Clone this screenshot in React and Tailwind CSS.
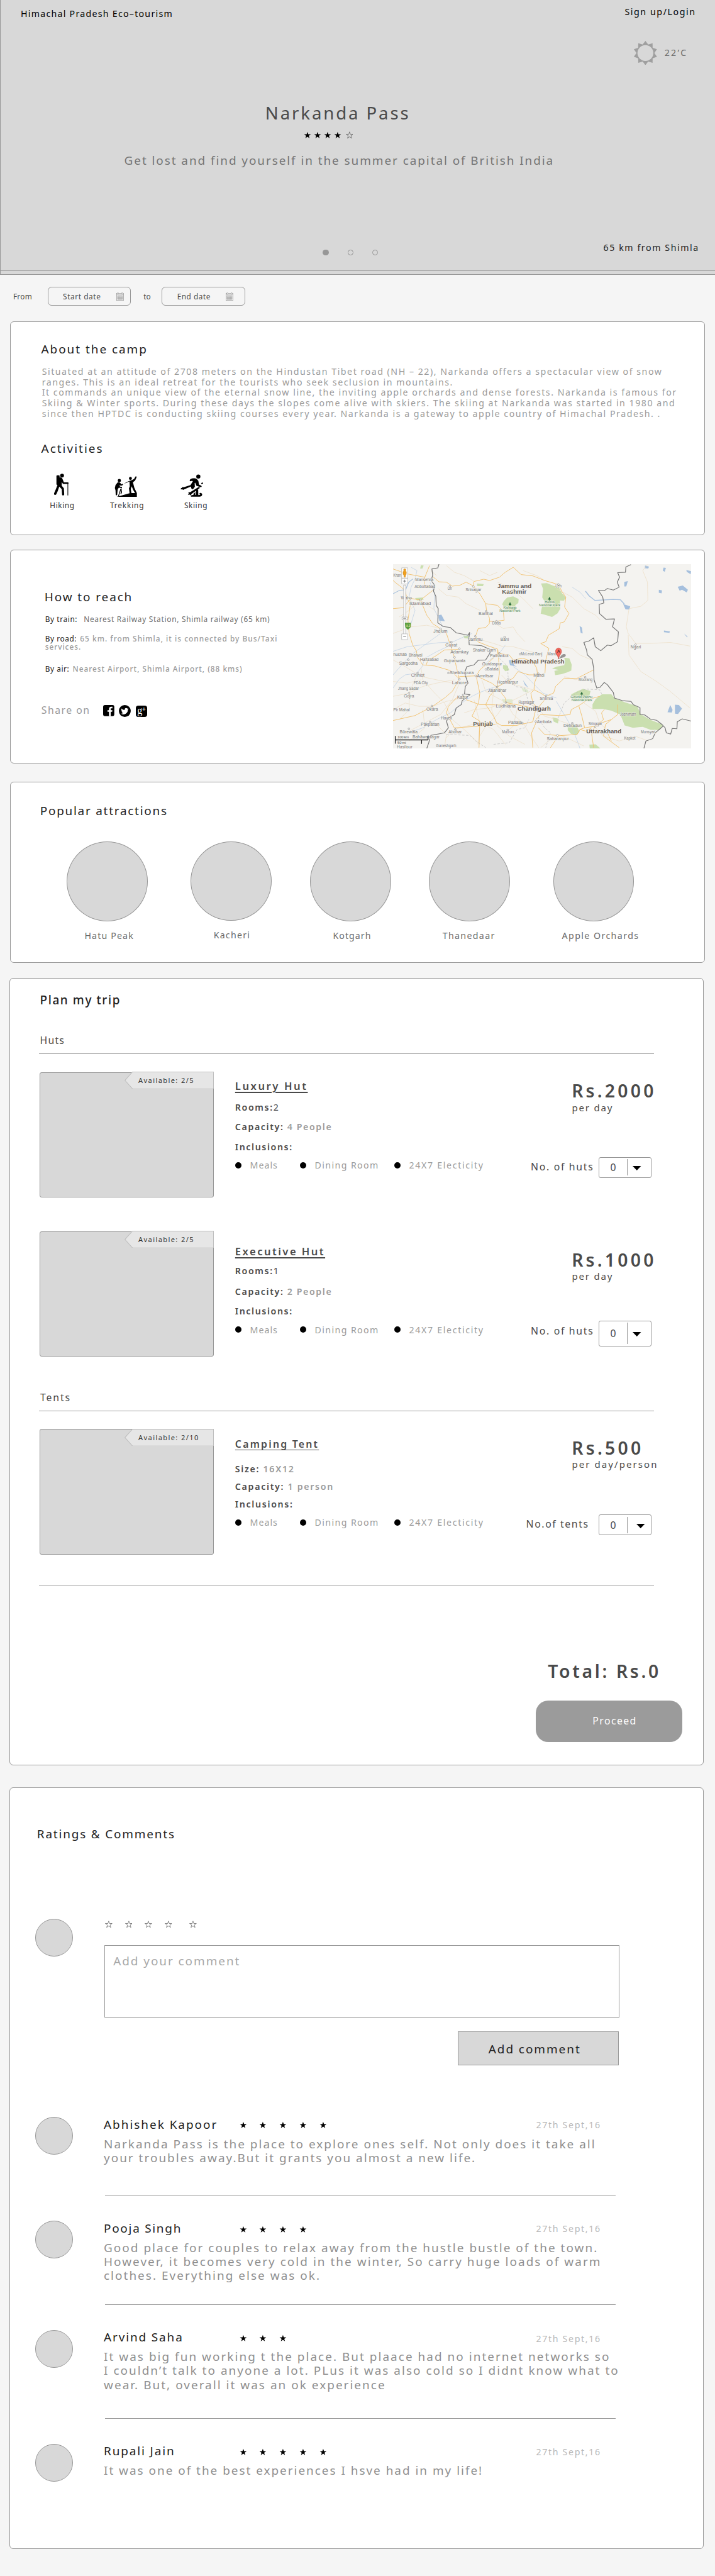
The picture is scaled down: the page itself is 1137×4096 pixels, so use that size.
import React from "react";

/* The page is laid out on a 0.78958px spacing unit, set once on the root. */

const star = "M12 1.2 14.7 9h8.2l-6.6 4.9 2.5 7.9L12 17l-6.8 4.8 2.5-7.9L1.1 9h8.2z";

function Star({ outline = false, className = "" }) {
  return (
    <svg viewBox="0 0 24 23" className={`h-14.5 w-15 shrink-0 ${className}`}>
      <path
        d={star}
        fill={outline ? "none" : "#000"}
        stroke={outline ? "#4a4a4a" : "none"}
        strokeWidth="1.3"
      />
    </svg>
  );
}

function Sun() {
  const pts = Array.from({ length: 20 }, (_, i) => {
    const r = i % 2 ? 18 : 24.5;
    const a = (i * Math.PI) / 10 - Math.PI / 2;
    return `${(24.5 + r * Math.cos(a)).toFixed(2)},${(24.5 + r * Math.sin(a)).toFixed(2)}`;
  }).join(" ");
  return (
    <svg viewBox="0 0 49 49" className="h-49 w-49">
      <polygon points={pts} fill="#9f9f9f" />
      <circle cx="24.5" cy="24.5" r="16" fill="#d8d8d8" />
    </svg>
  );
}

function CalendarIcon() {
  return (
    <svg viewBox="0 0 15 17" className="h-17 w-15" fill="none" stroke="#8a8a8a">
      <rect x=".5" y="2" width="14" height="14.4" strokeWidth=".8" />
      <path d="M.5 4.8h14" strokeWidth=".7" />
      <path d="M0 16.4h15" strokeWidth="1" />
      <circle cx="3.2" cy="1.8" r="1.3" fill="#f5f5f5" strokeWidth=".8" />
      <circle cx="11.8" cy="1.8" r="1.3" fill="#f5f5f5" strokeWidth=".8" />
      <path
        d="M2.5 7h10M2.5 9.3h10M2.5 11.6h10M2.5 14h10M2.5 7v7M5 7v7M7.5 7v7M10 7v7M12.5 7v7"
        strokeWidth=".8"
      />
    </svg>
  );
}

function HikingIcon() {
  return (
    <svg viewBox="145 68 88 132" className="mb-3 ml-8 h-44 w-29.5">
      <circle cx="193" cy="80" r="11.5" />
      <rect x="159" y="78" width="19" height="59" rx="5" />
      <path d="M176 92c8-3 16 0 19 7l9 22h24c6 0 6 10 0 10h-29l-8-12v22l13 16 2 36c0 9-12 9-13 1l-2-32-15-15-9 26-9 20c-5 8-17 3-13-6l11-26 14-36z" />
      <path d="M226 128h4v72h-4z" />
    </svg>
  );
}

function TrekkingIcon() {
  return (
    <svg viewBox="509 84 137 126" className="ml-9 h-42 w-46">
      <circle cx="538" cy="111" r="9.5" />
      <path d="M528 122c6-3 14 0 17 5l5 7 8-3 3 6-13 6-9-5 3 10 12 2v6l-19-2-7 10-3 32c-1 6-9 6-9-1l-1-25-4-14 4-18z" />
      <path d="M545 160h5l-15 46h-5zM551 152l3 30-5 12-4-4z" />
      <circle cx="605" cy="98" r="9" />
      <path d="M565 130l30-16 20-6 12-7 8-13c3-4 9-1 7 4l-9 20-13 9 9 34 15 32v22H522l38-10 40-11-4-30 5-12-2-30-18 9-13 4zM613 146l-6 16 4 25h22l-12-20z" fillRule="evenodd" />
    </svg>
  );
}

function SkiingIcon() {
  return (
    <svg viewBox="907 74 138 136" className="h-45.5 w-46.5">
      <circle cx="1014" cy="88" r="12.5" />
      <path d="M966 104c12-7 30-6 38-2l10 12 4 22 13 7c6 4 2 11-4 9l-24-8-8-19-3 2 1 23-12 16-9-6-5-21 14-22-4-3-13 3c-3-4-2-9 2-13z" />
      <path d="M968 139l4 8-42 18-8 4-4-4-9 1v-8l7-2 2-5 8 2zM1036 124c7-1 9 5 5 8l-7 2-4-4zM1017 151l7 5-50 36-6 10-5-5-12 1 5-8-2-8 10 1z" />
      <path d="M1000 165l13 2 1 33 12-3-6-6c4-9 20-3 17 8-2 7-8 10-15 10h-50c-7-2-2-8 3-9l10-1-1-7 12-10-1 16h5z" />
    </svg>
  );
}

/* Map geometry is in a 1520 x 1113 survey grid that starts at (28, 21). */
const mapLabels = [
  ["Mansehra", 141, 233, 124], ["Abbottabad", 138, 243, 164], ["Uri", 306, 328, 176],
  ["Srinagar", 397, 478, 185, 1], ["Leh", 855, 886, 162], ["Wah", 68, 112, 233],
  ["Islamabad", 111, 221, 267, 1], ["Banihal", 464, 537, 329], ["Doda", 533, 576, 387],
  ["Jhelum", 234, 305, 437], ["Jammu", 412, 484, 486, 1], ["Bani", 575, 618, 484],
  ["Gujrat", 295, 355, 518, 1], ["Adamkay", 320, 413, 561], ["Shakar Garh", 434, 551, 549],
  ["Pathankot", 522, 616, 583], ["McLeod Ganj", 679, 788, 572], ["Manali", 814, 872, 572],
  ["hushāb", 30, 98, 577], ["Bhalwal", 108, 177, 580], ["Sargodha", 59, 153, 628, 1],
  ["Hafizabad", 166, 260, 608], ["Gujranwala", 287, 396, 612, 1], ["Gurdaspur", 482, 583, 633],
  ["Batala", 506, 565, 663], ["Sheikhupura", 317, 439, 687], ["Amritsar", 456, 539, 705],
  ["Mandi", 743, 799, 703], ["Chiniot", 120, 188, 701], ["FDA City", 134, 205, 745],
  ["Lahore", 328, 404, 746, 1], ["Hoshiarpur", 559, 665, 742], ["Moorang", 973, 1044, 727],
  ["Jhang Sadar", 54, 159, 782], ["Jalandhar", 511, 605, 791, 1], ["Gojra", 83, 135, 826],
  ["Kasur", 355, 411, 833], ["Shimla", 775, 843, 841], ["Rupnagar", 667, 747, 865],
  ["Ludhiana", 552, 653, 886, 1], ["Pir Mahal", 30, 113, 911], ["Okāra", 198, 257, 905],
  ["Joshimath", 1184, 1266, 936], ["Haveli", 272, 329, 959], ["Pākpattan", 170, 264, 999],
  ["Patiala", 614, 684, 987], ["Ambala", 761, 835, 983, 1], ["Dehradun", 896, 989, 1004],
  ["Srinagar", 1023, 1093, 994], ["Būrewāla", 62, 153, 1045], ["Abohar", 311, 378, 1044],
  ["Mauran", 583, 644, 1044], ["Munsyari", 1290, 1364, 1042], ["Bahāwalnagar", 127, 265, 1074],
  ["Saharanpur", 811, 923, 1084], ["Kapkot", 1205, 1262, 1081], ["Ganeshgarh", 247, 350, 1125],
  ["Ngari", 1238, 1291, 530], ["Khan", 30, 68, 96],
];
const mapRegions = [
  ["Jammu and", 560, 733, 164], ["Kashmir", 583, 708, 200], ["Himachal Pradesh", 631, 901, 622],
  ["Chandigarh", 662, 831, 907], ["Punjab", 436, 537, 997], ["Uttarakhand", 1012, 1191, 1045],
];
const mapParks = [
  ["Kishtwar", 590, 658, 289], ["National Park", 570, 677, 309], ["Hemis", 801, 851, 256],
  ["National Park", 771, 880, 276], ["Govind Pashu", 932, 1044, 831], ["National Park", 937, 1043, 851],
];
const towns = [
  [437, 156], [167, 238], [447, 457], [325, 492], [366, 532], [569, 560], [106, 599], [341, 584],
  [366, 716], [449, 696], [310, 679], [558, 764], [613, 718], [603, 857], [755, 972], [687, 981],
  [226, 878], [217, 975], [109, 1016], [345, 1020], [807, 817], [768, 683], [502, 306], [555, 366],
  [870, 144], [317, 155], [270, 413], [865, 1056], [941, 982], [1058, 1003], [1263, 508], [385, 811],
  [109, 802], [153, 679], [596, 462], [1007, 704], [612, 1023], [118, 226], [675, 565], [501, 657],
];

const mx = (x) => (x - 28) * 0.3954;
const my = (y) => (y - 21) * 0.3333;

function MapText({ items, size, fill, bold }) {
  return items.map(([t, x1, x2, y, big], i) => (
    <text
      key={i}
      x={mx(x1)}
      y={my(y)}
      textLength={(x2 - x1) * 0.3954}
      lengthAdjust="spacingAndGlyphs"
      fontSize={big ? size + 1 : size}
      fontWeight={bold ? 700 : 400}
      fill={fill}
      stroke="#f4f3f0"
      strokeWidth="2"
      strokeOpacity=".7"
      paintOrder="stroke"
    >
      {t}
    </text>
  ));
}

function RegionMap() {
  return (
    <svg viewBox="0 0 601 371" className="mt-28 h-371 w-601 shrink-0 font-['Liberation_Sans']">
      <rect width="601" height="371" fill="#f4f3f0" />
      <g transform="scale(.3954 .3333) translate(-28 -21)" fill="none" strokeLinejoin="round">
        <g fill="#cadfaf">
          <path d="M610 222 640 216 668 232 666 256 650 270 660 290 640 306 604 304 598 284 584 264 592 244z" />
          <path d="M782 138 812 136 846 152 872 160 888 196 908 222 898 242 878 240 880 290 866 318 838 340 804 328 780 320 786 282 802 250 788 222 792 170z" />
          <path d="M900 586 926 590 938 628 936 664 914 676 886 686 854 692 850 666 872 660 838 652 862 640 900 632 904 608z" />
          <path d="M1044 868 1060 836 1092 808 1140 808 1158 832 1210 856 1272 880 1290 928 1340 962 1404 992 1386 1024 1340 1022 1300 1004 1250 1010 1208 996 1186 930 1140 906 1096 896 1044 896z" />
          <path d="M936 808 966 790 996 774 1034 788 1026 826 1036 850 960 846 938 838z" />
          <path d="M588 630 610 634 620 662 600 668 588 652zM918 996 960 990 978 1034 960 1056 934 1046 918 1024zM1028 1112 1060 1110 1084 1134H1030z" />
          <path d="M456 138 490 142 486 154 456 154zM140 226 180 222 184 236 150 240zM386 452 412 454 410 470 392 468zM840 946 872 956 868 984 846 972zM170 28 184 30 178 48 166 48z" />
          <path d="M682 768 714 780 720 798 690 790zM582 836 636 838 638 862 590 858z" fillOpacity=".5" />
        </g>
        <g fill="#a5bfdd">
          <path d="M1206 128 1224 124 1216 156 1206 156zM1478 158 1504 150 1530 176 1524 192 1500 176 1488 182zM1382 176 1398 180 1396 198 1382 194zM1406 42 1418 44 1412 68 1402 60zM1312 30 1332 36 1328 48 1310 46zM1522 56 1546 64 1544 82 1524 68zM978 394 990 404 994 440 984 436zM1464 870 1484 872 1500 894 1480 926 1464 924zM1440 872 1452 902 1448 918 1426 916zM1200 262 1236 276 1232 296 1212 294zM1408 422 1438 428 1436 436 1408 432zM1510 440 1528 458 1526 464zM618 602 640 600 644 632 660 640 624 632zM260 330 274 326 292 366 262 362zM690 722 718 770 700 752z" />
        </g>
        <g stroke="#a5bfdd" strokeWidth="5">
          <path d="M1008 184 1028 214 1056 240 1090 238 1150 234 1186 236 1206 262" />
          <path d="M28 200 60 180 92 176 108 130 130 110" strokeWidth="4" />
        </g>
        <g stroke="#bdd0e6" strokeWidth="2.6">
          <path d="M28 548 100 520 180 508 260 496 330 492 390 460 430 440" />
          <path d="M28 770 60 716 90 690 150 680 176 640 190 590 250 550 330 506" />
          <path d="M110 1040 180 1010 250 960 320 920 390 850 430 820 470 796 530 770 600 740" />
          <path d="M216 130 240 200 236 290 262 350 280 400M28 690 80 620 130 560 200 500 270 440" />
          <path d="M480 640 520 600 570 560 600 510M640 640 700 690 740 740 790 800 860 830" />
          <path d="M860 850 900 930 940 1010 970 1100 980 1134M940 160 980 190 1010 230" />
          <path d="M120 40 150 60 140 110 120 160 110 220 140 300 120 380" />
        </g>
        <g stroke="#ecdcc2" strokeWidth="2.4">
          <path d="M300 30 340 70 390 90 440 124M470 60 520 90 560 70M690 60 760 90 800 120M860 170 940 220 1000 290 1060 330 1084 360" />
          <path d="M260 170 300 210 360 220 400 260 470 300M550 380 590 410 640 400 660 440 700 490M480 480 540 500 590 520 640 520 700 540 760 560" />
          <path d="M1324 24 1300 60 1324 130 1326 240 1290 276 1230 290 1216 400 1226 440 1264 500 1340 500 1440 494 1540 516M1226 450 1230 570 1290 670 1370 730 1440 790 1540 890" />
          <path d="M890 520 940 530 980 570 1040 600M900 700 960 720 1000 700M28 600 90 640 170 700 250 720 330 740" />
          <path d="M28 820 110 800 180 760 250 740 340 720M60 960 110 900 110 800 150 690M110 1030 190 980 270 930 330 840 370 730" />
          <path d="M170 640 180 720 240 800 290 860 330 960 400 1030 470 1110M28 900 90 860 160 880 230 880 300 850 390 830" />
          <path d="M300 1070 340 1020 400 1000 470 980 540 1020 600 1110M440 840 470 980 460 1110M540 790 530 900 560 1000 620 1060 700 1110" />
          <path d="M600 860 560 930 500 1000 470 1060M610 870 640 930 690 980 730 1060 770 1130M480 720 500 790 560 830 610 860 680 820 740 780" />
          <path d="M580 690 620 740 680 760 740 780M760 880 800 940 860 960 930 990 1000 1000M870 1050 820 1090 780 1130M870 1050 930 1080 1000 1120M1060 1010 1100 1060 1180 1090 1260 1060 1330 1090" />
          <path d="M1000 860 1060 910 1080 980 1130 1040M220 60 250 90M560 130 620 160 690 230 740 290M28 440 120 400 200 390 270 410M60 340 110 300 170 240 240 300" />
          <path d="M28 730 100 740 170 720M180 900 190 1010 110 1090M240 980 300 1050 290 1130M390 920 440 900 520 890 590 860M660 900 640 1000 600 1040M700 860 760 880" />
        </g>
        <g stroke="#f1c06c" strokeWidth="3.2">
          <path d="M232 98 262 128 300 130 330 154 370 148 400 130 436 152M436 152 440 126 490 112 520 120 570 100 600 70 640 40 680 84 740 92 800 120 870 144M436 152 470 200 500 260 504 300 520 350 518 382 500 404 462 410 450 450" />
          <path d="M500 260 560 270 590 310 594 360 540 368 518 366M870 144 890 190 908 220 902 280 924 320 900 370 880 376 874 412 820 450 806 490 780 500 822 530 806 600 802 680" />
          <path d="M450 460 460 490 510 514 560 534 562 560 620 570 640 600 690 590 740 610 760 650 764 690M562 540 566 600 570 680 558 760M568 556 510 620 470 660 452 696" />
          <path d="M168 238 200 330 230 380 270 412 300 440 340 580 350 640 366 714M28 50 100 80 190 100 214 30M190 100 186 150 228 160M28 120 90 180 98 226 118 228 168 238 230 180M28 290 80 284 118 230" />
          <path d="M94 230 118 250 104 360 110 440 128 510 148 548 150 580 180 630 240 636 320 664 366 714M196 632 206 600 240 580 290 540 360 536" />
          <path d="M366 714 330 790 290 830 230 880 140 936 28 966M366 700 452 696 530 740 558 764 640 710 664 670 720 690 764 690 748 740 746 780" />
          <path d="M558 764 600 830 604 858 700 880 756 896 768 880M558 764 520 820 500 870 540 940 556 980 580 996 655 996 740 974 756 894M400 840 470 870 600 872 650 866" />
          <path d="M400 820 350 830 310 880 300 920 340 1010 470 1000 550 990M452 700 470 800 464 860 430 940 470 970 466 1130" />
          <path d="M746 780 730 800 740 860 766 890 796 848 806 820 846 800 856 760 900 710 964 712 1000 690 1050 660M746 780 780 800 806 820" />
          <path d="M756 960 780 930 880 936 930 930 936 900 974 876 1020 840 1080 820M756 980 734 1040 740 1130M974 876 990 940 1004 1010 980 1020 966 1050 870 1058 830 1130M768 1010 800 1050 866 1056M1004 1010 1060 1000 1100 960 1090 920 1104 900" />
          <path d="M1140 960 1090 980 1056 1000 1040 1050 1050 1130M1170 870 1172 930 1110 990 1100 1060 1180 1130M980 1020 1010 1030 1040 1010M1084 1030 1120 1040 1140 1090" />
        </g>
        <g stroke="#b9b9b9" strokeWidth="2.4" strokeDasharray="12 8">
          <path d="M570 590 612 640 614 700 650 760 700 770 716 850 760 900 772 960 800 1010 830 1040 806 1130M870 950 900 860 960 800 1010 776 1080 780 1092 808M300 1050 420 1056 450 1090 500 1130M540 1110 620 1100 660 1020 700 1010 720 960" />
        </g>
        <g stroke="#777" strokeWidth="4">
          <path d="M262 21 256 44 226 50 230 88 222 120 240 148 234 184 246 216 248 270 258 290 256 376 284 398 320 404 350 436 410 450 418 434 414 470 416 508 480 514 520 536 522 558 500 600 462 602 440 630 404 640 392 680 410 740 396 760 392 806 420 810 400 830 380 846 376 870 350 890 340 930 310 950 300 970 310 1010 290 1040 220 1056 210 1100 200 1134" />
          <path d="M1240 24 1214 38 1212 70 1172 72 1182 100 1170 130 1180 160 1150 178 1120 168 1104 182 1074 180 1096 220 1102 256 1078 264 1080 320 1112 354 1156 352 1146 400 1176 430 1172 490 1138 514 1120 510 1086 544 1058 520 1050 466 1026 486 1000 494 1014 540 1018 570 1042 596 1050 650 1052 720 1066 770 1082 766 1104 736 1120 750 1150 796 1156 830 1196 846 1240 850 1252 870 1286 888 1286 930 1310 932 1340 958 1370 964 1398 990 1414 1010 1420 1040 1442 1048 1450 1014 1474 1016 1476 974 1500 956 1550 970" />
          <path d="M1404 1000 1364 1040 1350 1076 1316 1090 1306 1134" />
        </g>
      </g>
      <MapText items={mapLabels} size={8.2} fill="#777" />
      <MapText items={mapParks} size={6.6} fill="#4f8a5b" />
      <MapText items={mapRegions} size={12} fill="#635a52" bold />
      {towns.map(([x, y], i) => (
        <circle key={i} cx={mx(x)} cy={my(y)} r="1.7" fill="#fff" stroke="#777" strokeWidth=".8" />
      ))}
      {[[624, 262], [825, 230], [989, 803]].map(([x, y], i) => (
        <path
          key={i}
          transform={`translate(${mx(x)} ${my(y)})`}
          d="M0-4 3 2H.6V4H-.6V2H-3z"
          fill="#2f6e41"
        />
      ))}
      <g transform={`translate(${mx(871)} ${my(595)})`}>
        <path d="M0 0 6-8C10-12 17-10 14-6 12-3 6-3 0 0z" fill="#555" fillOpacity=".6" />
        <path d="M0 0C-1-8-6-10-6-16a6 6.5 0 0 1 12 0C6-10 1-8 0 0z" fill="#f7685c" stroke="#a83c34" strokeWidth=".7" />
        <text y="-12.5" textAnchor="middle" fontSize="8.5" fill="#222">A</text>
      </g>
      <g>
        <rect x="21.5" y="42" width="4" height="102" fill="#fff" stroke="#9a9a9a" strokeWidth=".8" />
        <path d="M24 118h12v6c0 4-3 5-6 8-3-3-6-4-6-8z" fill="#5a9e3f" />
        <text x="30" y="127" textAnchor="middle" fontSize="6" fontWeight="700" fill="#e8e6a8">H-2</text>
        <rect x="17.5" y="7.5" width="12" height="20.5" fill="#fff" stroke="#aaa" strokeWidth=".8" />
        <path d="M23.5 9.5a2.4 2.4 0 0 1 1.5 4.300l2 1.500-.4 5.700-1.300.4-.4 5h-2.800l-.4-5-1.300-.4-.4-5.700 2-1.500a2.400 2.400 0 0 1 1.500-4.300z" fill="#f0a020" stroke="#b87810" strokeWidth=".5" />
        <rect x="17.5" y="28.5" width="12" height="11.5" fill="#fff" stroke="#aaa" strokeWidth=".8" />
        <rect x="17.5" y="140.5" width="12" height="11.5" fill="#fff" stroke="#aaa" strokeWidth=".8" />
        <rect x="18" y="106.5" width="11" height="5.5" fill="#fff" stroke="#999" strokeWidth=".8" />
        <path d="M20.5 34.3h6M23.5 31.3v6M20.5 146.2h6M20.5 109.2h6" stroke="#777" strokeWidth="1.1" />
      </g>
      <g>
        <path d="M4.500 346v15.500M4.500 354h66M70.500 346v8M57.500 354v8" fill="none" stroke="#222" strokeWidth="1.6" />
        <text x="9" y="350.5" fontSize="7.5" textLength="23" fill="#555">100 km</text>
        <text x="9" y="362.5" fontSize="7.5" textLength="17" fill="#555">50 mi</text>
        <text x="8" y="370.5" fontSize="8" textLength="31" fill="#777">Hasilpur</text>
      </g>
    </svg>
  );
}

function Card({ className = "", children }) {
  return (
    <section className={`rounded-[6px] border border-[#979797] bg-white ${className}`}>
      {children}
    </section>
  );
}

function Heading({ className = "", children }) {
  return (
    <h2 className={`text-[18.95px] leading-28 whitespace-nowrap text-[#222] ${className}`}>
      {children}
    </h2>
  );
}

function Hero() {
  return (
    <header className="h-553 border-b border-l border-[#979797] bg-[#d8d8d8]">
      <div className="h-546 border-b border-[#979797] pt-13.5">
        <div className="flex items-start justify-between pr-38.5 pl-40.5 text-[14.21px] leading-21 text-black">
          <span className="mt-4 tracking-[1.25px]">Himachal Pradesh Eco–tourism</span>
          <span className="tracking-[1.58px]">Sign up/Login</span>
        </div>
        <div className="mt-43.5 flex items-center pl-1274">
          <Sun />
          <span className="ml-14 text-[14.21px] leading-21 tracking-[2.3px] text-[#6b6b6b]">22’C</span>
        </div>
        <h1 className="mt-76 pl-533 text-[27.6px] leading-42 tracking-[2.88px] text-[#4a4a4a]">
          Narkanda Pass
        </h1>
        <div className="mt-16.25 flex gap-5.25 pl-610.5">
          <Star />
          <Star />
          <Star />
          <Star />
          <Star outline className="ml-3.5" />
        </div>
        <p className="mt-28.75 pl-249 text-[18.95px] leading-28 tracking-[1.93px] text-[#757575]">
          Get lost and find yourself in the summer capital of British India
        </p>
        <div className="mt-152.25 flex items-start pl-649">
          <div className="mt-13.5 flex gap-37.75">
            <span className="h-12 w-12 rounded-full bg-[#979797]" />
            <span className="h-12 w-12 rounded-full border border-[#979797]" />
            <span className="h-12 w-12 rounded-full border border-[#979797]" />
          </div>
          <span className="ml-453.5 text-[14.21px] leading-21 tracking-[1.57px] text-[#222]">
            65 km from Shimla
          </span>
        </div>
      </div>
    </header>
  );
}

function DateField({ label, className }) {
  return (
    <button
      className={`flex h-38 w-168 items-center justify-between rounded-[6px] border border-[#979797] pl-29.5 ${className}`}
    >
      <span>{label}</span>
      <CalendarIcon />
    </button>
  );
}

function DateBar() {
  return (
    <div className="mt-25 flex items-center pl-26.5 text-[11.84px] leading-18 text-[#4a4a4a]">
      <span className="w-69.5 tracking-[0.3px]">From</span>
      <DateField label="Start date" className="pr-13 tracking-[0.59px]" />
      <span className="w-62 pl-25">to</span>
      <DateField label="End date" className="pr-23 tracking-[0.51px]" />
    </div>
  );
}

const aboutLines = [
  "Situated at an attitude of 2708 meters on the Hindustan Tibet road (NH – 22), Narkanda offers a spectacular view of snow",
  "ranges. This is an ideal retreat for the tourists who seek seclusion in mountains.",
  "It commands an unique view of the eternal snow line, the inviting apple orchards and dense forests. Narkanda is famous for",
  "Skiing & Winter sports. During these days the slopes come alive with skiers. The skiing at Narkanda was started in 1980 and",
  "since then HPTDC is conducting skiing courses every year. Narkanda is a gateway to apple country of Himachal Pradesh. .",
];

function About() {
  return (
    <Card className="mt-31 ml-20 h-431 w-1400 pt-40.75 pl-61.75">
      <Heading className="tracking-[1.96px]">About the camp</Heading>
      <div className="mt-21.75 ml-1.5 text-[14.21px] leading-21 tracking-[1.51px] whitespace-nowrap text-[#9b9b9b]">
        {aboutLines.map((l) => (
          <p key={l}>{l}</p>
        ))}
      </div>
      <Heading className="mt-45 tracking-[2.02px]">Activities</Heading>
      <div className="mt-36 flex pl-17.5 text-[11.84px] leading-18 text-[#333]">
        <div className="w-121">
          <div className="flex h-48 items-end"><HikingIcon /></div>
          <p className="mt-7.5 tracking-[0.58px]">Hiking</p>
        </div>
        <div className="w-142">
          <div className="flex h-48 items-end"><TrekkingIcon /></div>
          <p className="mt-7.5 tracking-[0.87px]">Trekking</p>
        </div>
        <div>
          <div className="flex h-48 items-end"><SkiingIcon /></div>
          <p className="mt-7.5 ml-7.5 tracking-[0.61px]">Skiing</p>
        </div>
      </div>
    </Card>
  );
}

function Reach() {
  return (
    <Card className="mt-29 ml-20 flex h-431 w-1400 items-start">
      <div className="w-770 shrink-0 pt-80.25 pl-68.5 text-[11.84px] leading-18 whitespace-nowrap text-[#9b9b9b]">
        <Heading className="tracking-[1.89px]">How to reach</Heading>
        <p className="mt-20.5 ml-1 flex tracking-[0.74px] text-[#6b6b6b]">
          <span className="w-78 tracking-[0.62px] text-[#222]">By train:</span>
          Nearest Railway Station, Shimla railway (65 km)
        </p>
        <div className="mt-22.5 ml-1 leading-17 font-medium tracking-[1.05px]">
          <p className="flex">
            <span className="w-70.5 font-normal tracking-[0.6px] text-[#222]">By road:</span>
            65 km. from Shimla, it is connected by Bus/Taxi
          </p>
          <p className="tracking-[1px]">services.</p>
        </div>
        <p className="mt-25.5 ml-1 flex font-medium tracking-[1px]">
          <span className="w-55.5 font-normal tracking-[0.6px] text-[#222]">By air:</span>
          Nearest Airport, Shimla Airport, (88 kms)
        </p>
        <div className="mt-63.25 -ml-6.5 flex items-center text-[15.8px] leading-24 tracking-[1.48px]">
          <span className="w-124.5">Share on</span>
          <svg viewBox="0 0 24 24" className="h-22.5 w-22.5">
            <rect width="24" height="24" rx="4" />
            <path
              d="M16.3 24v-9.300h3.100l.5-3.600h-3.600V8.800c0-1.100.3-1.800 1.800-1.800h1.900V3.800c-.3 0-1.500-.1-2.800-.1-2.800 0-4.700 1.700-4.700 4.800v2.600H9.400v3.600h3.100V24z"
              fill="#fff"
            />
          </svg>
          <svg viewBox="0 0 24 24" className="mt-1 ml-9 h-24 w-24">
            <circle cx="12" cy="12" r="12" />
            <path
              d="M19.500 7.700c-.6.200-1.200.4-1.800.5.700-.4 1.200-1 1.400-1.700-.6.400-1.300.6-2 .8a3.100 3.100 0 0 0-5.400 2.800C9.100 10 6.800 8.700 5.300 6.900c-.8 1.400-.4 3.300 1 4.200-.5 0-1-.2-1.400-.4 0 1.500 1 2.800 2.500 3.100-.5.100-.9.200-1.400.1.400 1.200 1.500 2.100 2.900 2.200a6.300 6.300 0 0 1-4.600 1.300 8.900 8.900 0 0 0 13.700-7.900c.6-.5 1.100-1.100 1.500-1.800z"
              fill="#fff"
            />
          </svg>
          <span className="mt-3 ml-10 flex h-22.5 w-23 items-center justify-center rounded-[4px] bg-black font-['Liberation_Serif'] text-[16px] leading-20 tracking-[-0.5px] text-white">
            <span className="-mt-4">g</span>
            <span className="-mt-7 text-[11px] font-bold">+</span>
          </span>
        </div>
      </div>
      <RegionMap />
    </Card>
  );
}

const attractions = [
  ["Hatu Peak", "ml-36 tracking-[1.14px]", ""],
  ["Kacheri", "ml-46 tracking-[1.22px]", "ml-87 -mt-1"],
  ["Kotgarh", "ml-46.5 tracking-[1.02px]", "ml-77"],
  ["Thanedaar", "ml-27 tracking-[1.34px]", "ml-77"],
  ["Apple Orchards", "ml-17.5 tracking-[1.41px]", "ml-87"],
];

function Attractions() {
  return (
    <Card className="mt-36 ml-20 h-364.5 w-1400 pt-43.5 pl-59.5">
      <Heading className="tracking-[1.74px]">Popular attractions</Heading>
      <div className="mt-48.25 flex pl-53.5">
        {attractions.map(([name, labelCls, cls]) => (
          <figure key={name} className={`w-163 ${cls}`}>
            <div className="h-160.5 rounded-[50%] border border-[#979797] bg-[#d8d8d8]" />
            <figcaption
              className={`mt-19.25 text-[14.21px] leading-21 whitespace-nowrap text-[#6b6b6b] ${labelCls}`}
            >
              {name}
            </figcaption>
          </figure>
        ))}
      </div>
    </Card>
  );
}

const stays = {
  luxury: {
    tag: "Available: 2/5",
    title: "Luxury Hut",
    titleCls: "mt-16 text-[16.6px] tracking-[2.56px] underline-offset-3 decoration-2",
    specs: [["Rooms:", "2", "mt-17.25"], ["Capacity:", " 4 People", "mt-18"], ["Inclusions:", "", "mt-18"]],
    specCls: "tracking-[1.6px]",
    listCls: "mt-15.5",
    price: "Rs.2000",
    priceCls: "mt-16.75 tracking-[4.2px]",
    unit: "per day",
    unitCls: "mt-2.25 tracking-[1.79px]",
    pick: "No. of huts",
    pickCls: "mt-8.25 w-136.5 tracking-[1.69px]",
    rowCls: "mt-87.75",
    selectCls: "h-42.5",
    caretCls: "ml-10.5",
  },
  executive: {
    tag: "Available: 2/5",
    title: "Executive Hut",
    titleCls: "mt-27.75 text-[16.6px] tracking-[2.46px] underline-offset-3 decoration-2",
    specs: [["Rooms:", "1", "mt-15.25"], ["Capacity:", " 2 People", "mt-19.5"], ["Inclusions:", "", "mt-17"]],
    specCls: "tracking-[1.6px]",
    listCls: "mt-15.75",
    price: "Rs.1000",
    priceCls: "mt-36.75 tracking-[4.2px]",
    unit: "per day",
    unitCls: "mt-2 tracking-[1.79px]",
    pick: "No. of huts",
    pickCls: "mt-9.25 w-136.5 tracking-[1.69px]",
    rowCls: "mt-77",
    selectCls: "h-52.5",
    caretCls: "ml-10.5",
  },
  tent: {
    tag: "Available: 2/10",
    title: "Camping Tent",
    titleCls: "mt-17.75 text-[15.8px] tracking-[2.24px] underline-offset-3 decoration-1",
    specs: [["Size:", " 16X12", "mt-25.75"], ["Capacity:", " 1 person", "mt-13.5"], ["Inclusions:", "", "mt-12.75"]],
    specCls: "tracking-[1.68px]",
    listCls: "mt-15.5",
    price: "Rs.500",
    priceCls: "mt-17.25 tracking-[4.27px]",
    unit: "per day/person",
    unitCls: "mt-1.25 tracking-[2.06px]",
    pick: "No.of tents",
    pickCls: "mt-8 -ml-9.5 w-146 tracking-[1.6px]",
    rowCls: "mt-89",
    selectCls: "h-42.5",
    caretCls: "ml-17.5",
  },
};

function Amenity({ className = "", children }) {
  return (
    <li className={`flex items-center ${className}`}>
      <span className="mr-17 h-13 w-13 shrink-0 rounded-full bg-black" />
      {children}
    </li>
  );
}

function Stay({ stay, className }) {
  return (
    <div className={`flex h-252.5 items-start whitespace-nowrap ${className}`}>
      <div className="relative h-full w-351 shrink-0 rounded-[3px] border border-[#979797] bg-[#d8d8d8]">
        <div className="absolute -top-2.5 -right-0.5 h-35 w-180">
          <svg viewBox="0 0 180 35" className="absolute inset-0 h-full w-full">
            <path d="M16 .6H179.400V34.400H16L.8 17.500z" fill="#e6e6e6" stroke="#bdbdbd" strokeWidth="1.27" />
          </svg>
          <span className="relative pl-28.5 text-[11.05px] leading-35 tracking-[1.4px] text-[#333]">
            {stay.tag}
          </span>
        </div>
      </div>
      <div className="ml-42.5 w-595.5 shrink-0">
        <h3 className={`leading-26 font-semibold text-[#4a4a4a] underline ${stay.titleCls}`}>
          {stay.title}
        </h3>
        <div className={`text-[14.21px] leading-22 font-semibold text-[#9b9b9b] ${stay.specCls}`}>
          {stay.specs.map(([k, v, cls]) => (
            <p key={k} className={cls}>
              <span className="text-[#4a4a4a]">{k}</span>
              {k === "Rooms:" ? <span className="font-normal text-[#4a4a4a]">{v}</span> : v}
            </p>
          ))}
        </div>
        <ul className={`flex text-[14.21px] leading-22 text-[#9b9b9b] ${stay.listCls}`}>
          <Amenity className="w-130.5 tracking-[1.02px]">Meals</Amenity>
          <Amenity className="w-190 tracking-[1.38px]">Dining Room</Amenity>
          <Amenity className="tracking-[1.65px]">24X7 Electicity</Amenity>
        </ul>
      </div>
      <div className="w-262 shrink-0 text-[#4a4a4a]">
        <p className={`pl-82.5 text-[28.4px] leading-42 font-semibold ${stay.priceCls}`}>{stay.price}</p>
        <p className={`pl-83 text-[15px] leading-22 ${stay.unitCls}`}>{stay.unit}</p>
        <div className={`flex items-start text-[15.8px] leading-24 ${stay.rowCls}`}>
          <span className={stay.pickCls}>{stay.pick}</span>
          <button
            className={`flex w-106.5 items-center rounded-[3px] border border-[#979797] py-3.5 ${stay.selectCls}`}
          >
            <span className="w-56 pt-1 pl-22.5 text-left">0</span>
            <span className="h-full w-px bg-[#979797]" />
            <svg viewBox="0 0 17 9" className={`mt-4 h-9 w-17 ${stay.caretCls}`}>
              <path d="M0 0h17L8.500 9z" />
            </svg>
          </button>
        </div>
      </div>
    </div>
  );
}

function Rule({ className }) {
  return <hr className={`border-[#979797] ${className}`} />;
}

function Plan() {
  return (
    <Card className="mt-31 ml-18.5 h-1586 w-1399 pt-29 pl-60.25">
      <Heading className="ml-0.5 font-medium tracking-[1.6px]">Plan my trip</Heading>
      <h3 className="mt-55.5 ml-0.5 text-[15.8px] leading-24 tracking-[1.2px] text-[#4a4a4a]">Huts</h3>
      <Rule className="mt-14.75 -ml-1 w-1238" />
      <Stay stay={stays.luxury} className="mt-36" />
      <Stay stay={stays.executive} className="mt-67.75" />
      <h3 className="mt-70.5 ml-1 text-[15.8px] leading-24 tracking-[1.89px] text-[#4a4a4a]">Tents</h3>
      <Rule className="mt-15 -ml-1 w-1238" />
      <Stay stay={stays.tent} className="mt-35.5" />
      <Rule className="mt-61.5 -ml-1 w-1238" />
      <p className="mt-151.75 pl-1023.5 text-[28.4px] leading-42 font-semibold tracking-[3.65px] text-[#4a4a4a]">
        Total: Rs.0
      </p>
      <button className="mt-37 ml-998.5 h-84 w-296 rounded-[20px] bg-[#9b9b9b] pb-1.5 pl-115 text-left text-[15.8px] leading-24 tracking-[1.42px] text-white">
        Proceed
      </button>
    </Card>
  );
}

const comments = [
  {
    name: "Abhishek Kapoor",
    nameCls: "tracking-[1.98px]",
    stars: 5,
    lines: [
      "Narkanda Pass is the place to explore ones self. Not only does it take all",
      "your troubles away.But it grants you almost a new life.",
    ],
    textCls: "tracking-[2.01px]",
    dateCls: "mt-5.25",
    ruleCls: "mt-62",
  },
  {
    name: "Pooja Singh",
    nameCls: "tracking-[1.72px]",
    stars: 4,
    lines: [
      "Good place for couples to relax away from the hustle bustle of the town.",
      "However, it becomes very cold in the winter, So carry huge loads of warm",
      "clothes. Everything else was ok.",
    ],
    textCls: "tracking-[2.03px]",
    dateCls: "mt-5.25",
    ruleCls: "mt-44.25",
  },
  {
    name: "Arvind Saha",
    nameCls: "tracking-[1.87px]",
    stars: 3,
    lines: [
      "It was big fun working t the place. But plaace had no internet networks so",
      "I couldn’t talk to anyone a lot. PLus it was also cold so I didnt know what to",
      "wear. But, overall it was an ok experience",
    ],
    textCls: "tracking-[2.03px]",
    dateCls: "mt-7",
    ruleCls: "mt-53.75",
  },
  {
    name: "Rupali Jain",
    nameCls: "tracking-[1.88px]",
    stars: 5,
    lines: ["It was one of the best experiences I hsve had in my life!"],
    textCls: "tracking-[1.98px]",
    dateCls: "mt-7",
  },
];

function Avatar() {
  return <div className="h-76 w-76 shrink-0 rounded-full border border-[#979797] bg-[#d8d8d8]" />;
}

function Comment({ c, className }) {
  return (
    <article className={`flex items-start ${className}`}>
      <Avatar />
      <div className="ml-61.5 pt-0.5 whitespace-nowrap">
        <div className="flex w-1001.5 items-start">
          <h3 className={`w-273 text-[18.95px] leading-28 text-[#222] ${c.nameCls}`}>{c.name}</h3>
          <div className="mt-8.5 flex gap-25.25">
            {Array.from({ length: c.stars }, (_, i) => (
              <Star key={i} />
            ))}
          </div>
          <time className={`ml-auto text-[14.21px] leading-21 tracking-[1.63px] text-[#b8b8b8] ${c.dateCls}`}>
            27th Sept,16
          </time>
        </div>
        <div className={`mt-11.5 text-[18.95px] leading-28 text-[#8f8f8f] ${c.textCls}`}>
          {c.lines.map((l) => (
            <p key={l}>{l}</p>
          ))}
        </div>
        {c.ruleCls && <Rule className={`ml-2.5 w-1028 ${c.ruleCls}`} />}
      </div>
    </article>
  );
}

function Ratings() {
  return (
    <Card className="mt-44 ml-18.5 h-1533.5 w-1399 pt-78.25 pl-51.75">
      <Heading className="ml-3 tracking-[1.81px]">Ratings &amp; Comments</Heading>
      <div className="mt-157 flex items-start">
        <Avatar />
        <div className="ml-62.5 pt-3.5">
          <div className="flex gap-25 pl-1.5">
            <Star outline />
            <Star outline />
            <Star outline />
            <Star outline />
            <Star outline className="ml-9.5" />
          </div>
          <textarea
            placeholder="Add your comment"
            className="mt-35 block h-146.5 w-1037 resize-none border border-[#979797] bg-white pt-17 pl-17 text-[18.95px] leading-28 tracking-[1.94px] placeholder:text-[#a8a8a8]"
          />
          <button className="mt-27.5 ml-711.5 block h-68.5 w-324.5 border border-[#979797] bg-[#d8d8d8] pt-2 pl-61 text-left text-[18.95px] leading-28 tracking-[1.95px] text-[#222]">
            Add comment
          </button>
        </div>
      </div>
      {comments.map((c, i) => (
        <Comment key={c.name} c={c} className={i === 0 ? "mt-104" : "mt-50"} />
      ))}
    </Card>
  );
}

export default function App() {
  return (
    <main className="h-[4096px] w-[1137px] overflow-hidden bg-[#f5f5f5] font-['Noto_Sans',sans-serif] [--spacing:0.78958px]">
      <Hero />
      <DateBar />
      <About />
      <Reach />
      <Attractions />
      <Plan />
      <Ratings />
    </main>
  );
}
